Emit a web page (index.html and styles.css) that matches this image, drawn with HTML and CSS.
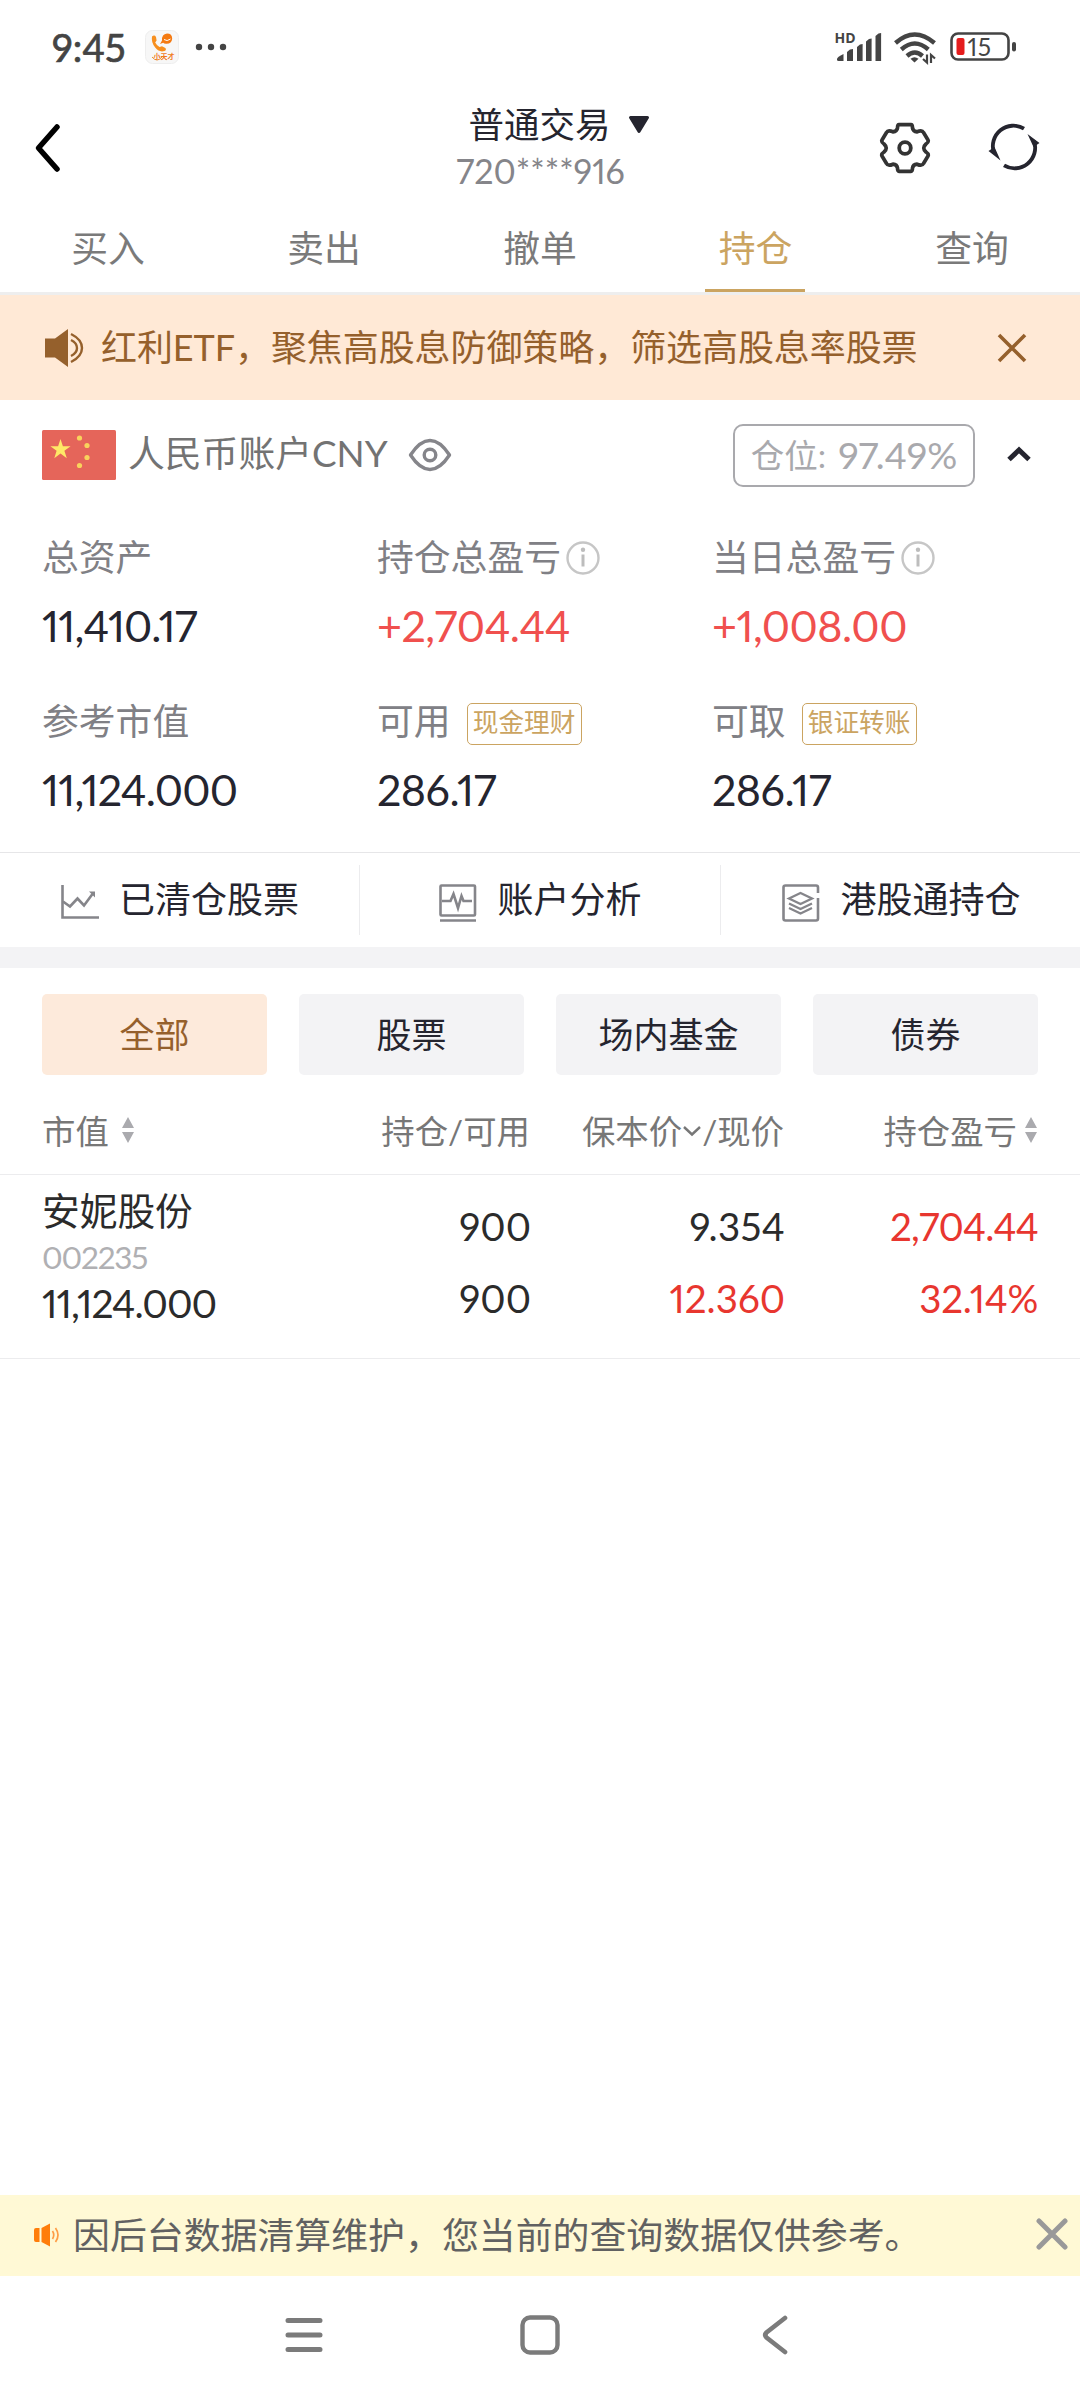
FILE: index.html
```html
<!DOCTYPE html>
<html lang="zh-CN">
<head>
<meta charset="utf-8">
<title>持仓</title>
<link rel="stylesheet" href="styles.css">
</head>
<body>
<div class="screen">
  <div class="status">
    <span class="clock">9:45</span>
    <svg class="app-icon" width="34" height="34" viewBox="0 0 34 34">
      <rect x=".5" y=".5" width="33" height="33" rx="7" fill="#f7f7f7" stroke="#eeeeee"/>
      <path d="M7 6.500q2.500-2 4 .5l.6 3.400-1.400 2q1.600 3 4.300 4.600l2.500-.8 3.400 1.800q1.400 2-.9 3-5 1.800-9.300-3.400-4.200-5.300-3.200-11.100z" fill="#f78f1e"/>
      <path d="M15 14l2-3.500q-.4-6.500 5-7 5.200 0 5.200 5.200-.6 5.400-6.200 5-2 0-2.800-.9z" fill="#f47a12"/>
      <path d="M19 9.500q3 2.400 6.500-.5" fill="none" stroke="#fff" stroke-width="1"/>
      <path d="M7 27q5 6 10 0" fill="none" stroke="#f08a2c" stroke-width="1"/>
      <text x="8.500" y="29" class="app-label">小天才</text>
    </svg>
    <svg class="dots" width="32" height="8" viewBox="0 0 32 8"><g fill="#444"><circle cx="4" cy="4" r="3.200"/><circle cx="16" cy="4" r="3.200"/><circle cx="28" cy="4" r="3.200"/></g></svg>
    <svg class="signals" width="184" height="48" viewBox="834 24 184 48">
      <text x="834.500" y="43" class="hd">HD</text>
      <g fill="#444">
        <path d="M837 59q0-2 6.500-5v7h-5q-1.500 0-1.500-1.500z"/>
        <path d="M847 52l3-2.500 3-.5v12h-6z"/>
        <path d="M857 47l3-2.500 2.600-.5v17h-5.600z"/>
        <path d="M866 41.500l3-2.500 2.600-.5v22.500h-5.600z"/>
        <path d="M875.500 36l3-2.500 2.600-.5v28h-5.600z"/>
      </g>
      <g fill="none" stroke="#444" stroke-width="4.400">
        <path d="M895.500 43q19-17 39 0"/><path d="M901.300 49.500q13.500-12 27 0"/><path d="M907 56q7.800-7 15.500 0" />
      </g>
      <path d="M910.500 58.800q4-3 8 0l-4 3.700z" fill="#444"/>
      <g fill="none" stroke="#444" stroke-width="2.200"><path d="M927 54.500v8l-4-3.500M931 63v-8l4 3.500"/></g>
      <rect x="951.500" y="33.500" width="57" height="26" rx="6.500" fill="none" stroke="#444" stroke-width="2.600"/>
      <rect x="956.500" y="38" width="8" height="17" rx="2" fill="#e51c1c"/>
      <text x="967.500" y="55.500" class="bat">15</text>
      <rect x="1012" y="42" width="4" height="9.500" rx="2" fill="#444"/>
    </svg>
  </div>

  <header class="topbar">
    <svg class="back" width="30" height="52" viewBox="0 0 30 52"><path d="M24 5L5.500 26 24 47" fill="none" stroke="#000" stroke-width="5.500" stroke-linecap="round" stroke-linejoin="round"/></svg>
    <div class="title">
      <div class="title-main">普通交易<svg width="22" height="18" viewBox="0 0 22 18"><path d="M2.500 1.500h17L11 15.500z" fill="#25252f" stroke="#25252f" stroke-width="3" stroke-linejoin="round"/></svg></div>
      <div class="title-sub">720****916</div>
    </div>
    <div class="tools">
      <svg width="52" height="52" viewBox="-26 -26 52 52" fill="none" stroke="#333" stroke-linejoin="round">
        <path stroke-width="3.700" d="M-6-23.300H6Q7.500-23.300 7.500-20 8-16.500 12-16.200 17-18.500 18.500-15.500L23-8Q24-6 21-4 16.500 0 21 4 24 6 23 8L18.500 15.500Q17 18.500 12 16.200 8 16.500 7.500 20 7.500 23.300 6 23.300H-6Q-7.500 23.300-7.500 20-8 16.500-12 16.200-17 18.500-18.500 15.500L-23 8Q-24 6-21 4-16.500 0-21-4-24-6-23-8L-18.500-15.500Q-17-18.500-12-16.200-8-16.500-7.500-20-7.500-23.300-6-23.300z"/>
        <circle r="5.800" stroke-width="3.800"/>
      </svg>
      <svg width="52" height="52" viewBox="-26 -25 52 52">
        <g fill="none" stroke="#25252f" stroke-width="3.800"><path d="M-20 6A20.500 20.500 0 0 1 10-18.300"/><path d="M20-6A20.500 20.500 0 0 1-10 18.300"/></g>
        <path d="M13.500-13L25.500-4l-6 4zM-13.500 13.500L-25.500 4l6-4z" fill="#25252f"/>
      </svg>
    </div>
  </header>

  <nav class="tabs">
    <span>买入</span><span>卖出</span><span>撤单</span><span class="on">持仓</span><span>查询</span>
  </nav>

  <div class="promo">
    <svg width="40" height="40" viewBox="0 0 40 40"><path d="M1 10.500h10L24 1v38L11 29.500H1z" fill="#95602c"/><g fill="none" stroke="#95602c" stroke-width="2.400"><path d="M27 6q11 5.500 11 14t-11 14"/><path d="M27 12q6 3 6 8t-6 8"/></g></svg>
    <span class="promo-text">红利ETF，聚焦高股息防御策略，筛选高股息率股票</span>
    <svg class="promo-x" width="30" height="30" viewBox="0 0 30 30"><path d="M2 2l26 26M28 2L2 28" stroke="#95602c" stroke-width="3.600"/></svg>
  </div>

  <section class="account">
    <svg class="flag" width="74" height="50" viewBox="0 0 74 50"><rect width="74" height="50" rx="1.500" fill="#e5655a"/>
      <path fill="#ffe867" d="M18.500 9l2.400 7.300h7.700l-6.200 4.500 2.400 7.400-6.300-4.600-6.200 4.600 2.300-7.400-6.200-4.500h7.700z"/>
      <g fill="#f9d35c"><circle cx="37.500" cy="8" r="2.600"/><circle cx="45" cy="15.500" r="2.600"/><circle cx="45" cy="27.500" r="2.600"/><circle cx="37.500" cy="35.500" r="2.600"/></g></svg>
    <span class="acct-name">人民币账户<span>CNY</span></span>
    <svg class="eye" width="44" height="34" viewBox="0 0 44 34" fill="none" stroke="#85858a" stroke-width="3.400"><path d="M2.500 17Q12 2.500 22 2.500T41.500 17Q32 31.500 22 31.500T2.500 17z" stroke-linejoin="round"/><circle cx="22" cy="17" r="5.800"/></svg>
    <span class="ratio"><i>仓位:</i><b>97.49%</b></span>
    <svg class="up" width="24" height="16" viewBox="0 0 24 16"><path d="M2 13.500L12 4l10 9.500" fill="none" stroke="#25252f" stroke-width="5"/></svg>
  </section>

  <section class="metrics">
    <div class="metric"><div class="label">总资产</div><div class="value">11,410.17</div></div>
    <div class="metric"><div class="label">持仓总盈亏<svg width="34" height="34" viewBox="0 0 34 34"><circle cx="17" cy="17" r="15.500" fill="none" stroke="#c6c6c6" stroke-width="2.400"/><circle cx="17" cy="8.800" r="2.200" fill="#bdbdbd"/><path d="M17 13.500v12" stroke="#bdbdbd" stroke-width="3"/></svg></div><div class="value red">+2,704.44</div></div>
    <div class="metric"><div class="label">当日总盈亏<svg width="34" height="34" viewBox="0 0 34 34"><circle cx="17" cy="17" r="15.500" fill="none" stroke="#c6c6c6" stroke-width="2.400"/><circle cx="17" cy="8.800" r="2.200" fill="#bdbdbd"/><path d="M17 13.500v12" stroke="#bdbdbd" stroke-width="3"/></svg></div><div class="value red">+1,008.00</div></div>
    <div class="metric"><div class="label">参考市值</div><div class="value">11,124.000</div></div>
    <div class="metric"><div class="label">可用<span class="tag">现金理财</span></div><div class="value cash">286.17</div></div>
    <div class="metric"><div class="label">可取<span class="tag">银证转账</span></div><div class="value cash">286.17</div></div>
  </section>

  <section class="actions">
    <div class="action"><svg width="38" height="38" viewBox="0 0 38 38" fill="none" stroke="#85858a" stroke-width="2.600"><path d="M1.500 1v32.500H38"/><path d="M2 17.500l7 5 7.500-8 6.500 7L31.500 10"/><path d="M28 7.500h6v6z" fill="#85858a" stroke="none"/></svg>已清仓股票</div>
    <div class="action"><svg width="38" height="38" viewBox="0 0 38 38" fill="none" stroke="#85858a" stroke-width="2.600"><rect x="1.500" y="1.500" width="34.500" height="30" rx="1"/><path d="M1 36.500h36"/><path d="M3 17h8.500l3-7 4.500 14 3.500-12 2 5H33"/></svg>账户分析</div>
    <div class="action"><svg width="38" height="38" viewBox="0 0 38 38" fill="none" stroke="#85858a" stroke-width="2.600"><path d="M36 9V3.500q0-2-2-2H3.500q-2 0-2 2v31q0 2 2 2H34q2 0 2-2V14"/><path d="M7 14.500L18.500 9 30 14.500 18.500 20zM7 19.500l11.500 5.500L30 19.500M7 24l11.500 5.500L30 24" stroke-width="2.300"/></svg>港股通持仓</div>
  </section>
  <div class="band"></div>

  <div class="filters"><span class="on">全部</span><span>股票</span><span>场内基金</span><span>债券</span></div>

  <div class="cols head">
    <div class="c1">市值<svg width="12" height="28" viewBox="0 0 12 28" fill="#aaaaae"><path d="M6 1l6 11H0zM6 27l6-11H0z"/></svg></div>
    <div>持仓/可用</div>
    <div>保本价<svg class="caret" width="18" height="12" viewBox="0 0 18 12"><path d="M1 2l8 7.500L17 2" fill="none" stroke="#777" stroke-width="2.400"/></svg>/现价</div>
    <div>持仓盈亏<svg width="12" height="28" viewBox="0 0 12 28" fill="#aaaaae"><path d="M6 1l6 11H0zM6 27l6-11H0z"/></svg></div>
  </div>
  <div class="cols row">
    <div class="stock"><div class="name">安妮股份</div><div class="code">002235</div><div class="mv">11,124.000</div></div>
    <div class="pair"><div>900</div><div>900</div></div>
    <div class="pair"><div class="cost">9.354</div><div class="up-red">12.360</div></div>
    <div class="pair last"><div class="up-red tight">2,704.44</div><div class="up-red pct">32.14%</div></div>
  </div>

  <div class="space"></div>

  <div class="notice">
    <svg class="horn" width="26" height="24" viewBox="0 0 26 24"><path d="M2 5h3.500v14H2q-2 0-2-2V7q0-2 2-2zM7.500 5L16 0.500v23L7.500 19z" fill="#ff7d0a"/><g fill="none" stroke="#ff9c45" stroke-width="1.700"><path d="M18.500 8q2.500 4 0 8"/><path d="M21.500 5q5 7 0 14"/></g></svg>
    <span>因后台数据清算维护，您当前的查询数据仅供参考。</span>
    <svg class="notice-x" width="32" height="32" viewBox="0 0 32 32"><path d="M3 3l26 26M29 3L3 29" stroke="#999" stroke-width="5" stroke-linecap="round"/></svg>
  </div>
  <div class="sysnav">
    <svg width="38" height="36" viewBox="0 0 38 36"><path d="M3 3.500h32M3 18h32M3 32.500h32" stroke="#7b7b7b" stroke-width="5" stroke-linecap="round"/></svg>
    <svg width="40" height="40" viewBox="0 0 40 40"><rect x="2.500" y="2.500" width="35" height="35" rx="7.500" fill="none" stroke="#7b7b7b" stroke-width="4.400"/></svg>
    <svg class="key-back" width="26" height="40" viewBox="0 0 26 40"><path d="M23 3L4.500 17.500q-2.500 2.500 0 5L23 37" fill="none" stroke="#7b7b7b" stroke-width="4.600" stroke-linecap="round"/></svg>
  </div>
</div>
</body>
</html>
```
FILE: styles.css
```css
* { box-sizing: border-box; }
body { margin: 0; background: #fff; }
svg { display: block; flex: none; }
.screen {
  width: 1080px; height: 2400px; display: flex; flex-direction: column;
  font-family: Lato, "Noto Sans CJK SC", sans-serif;
  font-variant-numeric: proportional-nums;
  color: #25252f; background: #fff; white-space: nowrap; overflow: hidden;
}

/* system status bar */
.status { height: 94px; display: flex; align-items: center; padding: 0 62px 0 52px; }
.clock { font-size: 38px; line-height: 46px; width: 93px; color: #444; -webkit-text-stroke: .7px #444; }
.dots { margin-left: 16px; }
.signals { margin: 2px 0 0 auto; }
.app-label { font-size: 7px; font-weight: 700; fill: #f07a1c; }
.hd { font: 700 14px "Open Sans", sans-serif; fill: #444; }
.bat { font: 24.500px Lato, sans-serif; font-variant-numeric: proportional-nums; fill: #444; letter-spacing: .5px; }

/* title bar */
.topbar { height: 108px; display: grid; grid-template-columns: 300px 1fr 300px; align-items: center; }
.back { margin-left: 33px; }
.title { text-align: center; }
.title-main { display: flex; justify-content: center; align-items: center; gap: 17px; font-size: 35.500px; line-height: 46px; padding-left: 38px; }
.title-sub { font-size: 34px; line-height: 46px; color: #85858a; padding-left: 1px; }
.tools { display: flex; gap: 57px; padding-left: 99px; }

.tabs { height: 93px; display: grid; grid-template-columns: repeat(5, 1fr); justify-items: center; border-bottom: 3px solid #eee; }
.tabs span { width: 100px; height: 90px; line-height: 92px; text-align: center; font-size: 36.800px; color: #7a7a7a; }
.tabs .on { color: #cba461; border-bottom: 3px solid #cba461; margin-right: 2px; padding-left: 1px; }

/* promotional strip */
.promo { height: 105px; background: #ffe9d6; color: #95602c; display: flex; align-items: center; padding: 0 53px 0 44px; }
.promo-text { font-size: 36px; line-height: 50px; margin: -2px 0 0 17px; letter-spacing: -.08px; }
.promo-x { margin-left: auto; }

/* account summary */
.account { height: 110px; display: flex; align-items: center; padding: 0 49px 0 42px; color: #737373; }
.acct-name { margin-left: 12px; font-size: 36.800px; line-height: 50px; padding-bottom: 5px; }
.eye { margin-left: 20px; }
.ratio { margin-left: auto; width: 242px; height: 63px; border: 2px solid #a9a9ad; border-radius: 10px; display: flex; justify-content: center; align-items: center; font-size: 33.500px; color: #a9a9ad; }
.ratio i { font-style: normal; padding-bottom: 3px; }
.ratio b { font-weight: 400; font-size: 37.500px; margin-left: 12px; padding-bottom: 1px; }
.up { margin: -2px 0 0 32px; }

.metrics { height: 343px; display: grid; grid-template-columns: 335px 335px 1fr; grid-template-rows: 121px 121px; row-gap: 43px; padding: 22px 0 0 42px; border-bottom: 1px solid #e6e6e8; }
.label { height: 50px; display: flex; align-items: center; font-size: 36.800px; line-height: 50px; color: #808085; padding-bottom: 1px; }
.label svg { margin-left: 5px; margin-top: 2px; }
.value { margin-top: 19px; font-size: 43px; line-height: 50px; letter-spacing: -.8px; }
.red { color: #f0504e; letter-spacing: -.5px; }
.cash { letter-spacing: -.5px; }
.tag { height: 42px; margin: 6px 0 0 16px; width: 115px; text-align: center; border: 1px solid #cba461; border-radius: 5px; font-size: 25.700px; line-height: 37px; color: #cba461; }

.actions { height: 94px; display: grid; grid-template-columns: 360px 361px 1fr; align-items: center; }
.action { height: 70px; display: flex; justify-content: center; align-items: center; gap: 20px; font-size: 36px; line-height: 64px; border-right: 1px solid #ececee; padding: 0 0 3px 1px; }
.action svg { margin-top: 8px; }
.action:last-child { border: 0; padding-left: 2px; }
.band { height: 21px; background: #f3f3f5; }

/* holdings */
.filters { display: grid; grid-template-columns: repeat(4, 225px); column-gap: 32px; padding: 26px 42px 0; }
.filters span { height: 81px; border-radius: 5px; background: #f3f3f5; font-size: 35px; line-height: 80px; text-align: center; }
.filters .on { background: #fdeadb; color: #95602c; }
.cols { display: grid; grid-template-columns: 278px 210px 254px 254px; padding: 0 42px; }
.cols > div { display: flex; justify-content: flex-end; align-items: center; }
.cols > .c1, .cols > .stock { justify-content: flex-start; }
.head { height: 100px; padding-top: 13px; font-size: 33.400px; line-height: 50px; color: #777; border-bottom: 1px solid #ececee; }
.head svg { margin: -3px 1px 0 8px; }
.head .c1 svg { margin-left: 13px; }
.head .caret { margin: 0 1px 0 1px; }
.row { height: 184px; border-bottom: 1px solid #ececee; color: #2b2b2b; }
.cols > .stock { flex-direction: column; align-items: flex-start; }
.cols > .pair { flex-direction: column; justify-content: flex-start; align-items: flex-end; font-size: 38.500px; padding: 15px 0 0; margin-right: -1px; }
.cols > .last { margin-right: 0; }
.pair div { line-height: 72px; }
.name { font-size: 37.700px; line-height: 50px; padding-top: 11px; }
.code { font-size: 31.500px; line-height: 34px; padding-top: 4px; letter-spacing: -1.200px; color: #b0b0b3; }
.mv { font-size: 39px; line-height: 50px; padding-top: 4px; letter-spacing: -1px; }
.pair .cost { letter-spacing: .3px; }
.pair .tight { letter-spacing: -.8px; }
.pair .pct { letter-spacing: -.3px; }
.up-red { color: #e8362f; }
.space { flex: 1; }

/* maintenance notice and navigation keys */
.notice { height: 81px; background: #fff9d5; display: flex; align-items: center; padding: 0 12px 0 34px; color: #616161; font-size: 36.900px; line-height: 50px; }
.horn { margin-top: -1px; }
.notice span { margin: -2px 0 0 13px; }
.notice-x { margin: -4px 0 0 auto; }
.sysnav { height: 124px; display: flex; align-items: center; padding: 0 0 6px 285px; gap: 197px; }
.key-back { margin-left: 5px; }
```
